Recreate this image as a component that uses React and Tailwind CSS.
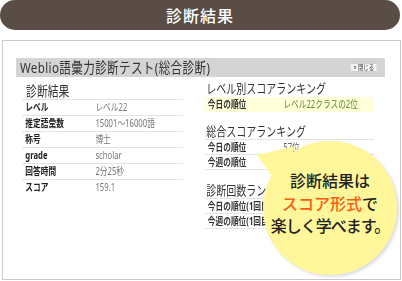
const resultRows = [
  ['レベル', 'レベル22'],
  ['推定語彙数', '15001〜16000語'],
  ['称号', '博士'],
  ['grade', 'scholar'],
  ['回答時間', '2分25秒'],
  ['スコア', '159.1'],
];

// values hidden behind the bubble are left empty
const totalRows = [
  ['今日の順位', '57位'],
  ['今週の順位', ''],
];

const countRows = [
  ['今日の順位(1回目)', ''],
  ['今週の順位(1回目)', ''],
];

function RankRow({ label, value }) {
  return (
    <div className="grid grid-cols-[102px_1fr] h-[15px] leading-[14px] border-b border-[#e4e4e4] text-[10px]">
      <span className="pl-[4px] font-bold text-[#333]">{label}</span>
      <span className="text-[#666]">{value}</span>
    </div>
  );
}

export default function App() {
  return (
    <div className="relative w-[402px] h-[281px] bg-white font-['Noto_Sans_CJK_JP',sans-serif] overflow-hidden">
      {/* top bar */}
      <div className="w-[400px] h-[30px] rounded-full bg-[#594d45] flex items-center justify-center">
        <span className="text-white text-[16px] font-medium tracking-[1px]">診断結果</span>
      </div>

      {/* screenshot frame */}
      <div className="ml-[2px] mt-[10px] w-[399px] h-[240px] border border-[#c9c9c9] overflow-hidden">
        <div className="w-[516px] pt-[17px] origin-top-left scale-x-[0.77] font-['Noto_Sans','Noto_Sans_CJK_JP',sans-serif]">
          <div className="ml-[17px] w-[479px] h-[19px] bg-[#d4d4d4] flex items-center justify-between pl-[5px] pr-[10px]">
            <span className="text-[15px] leading-[19px] tracking-[0.5px] text-[#333]">Weblio語彙力診断テスト(総合診断)</span>
            <span className="h-[9px] px-[3px] bg-[#f3f3f3] border border-[#d0d0d0] text-[7px] leading-[7px] text-[#444] flex items-center">× 閉じる</span>
          </div>

          <div className="flex">
            {/* left column */}
            <div className="ml-[25px] w-[209px]">
              <div className="pt-[6px] pl-[5px] text-[14px] leading-[16px] text-[#333] border-b border-[#e4e4e4]">診断結果</div>
              {resultRows.map(([label, value], i) => (
                <div
                  key={label}
                  className={`grid grid-cols-[95px_1fr] h-[16px] leading-[15px] text-[10px] ${i < resultRows.length - 1 ? 'border-b border-[#e4e4e4]' : ''}`}
                >
                  <span className="pl-[4px] font-bold text-[#222]">{label}</span>
                  <span className="text-[#777]">{value}</span>
                </div>
              ))}
            </div>

            {/* right column */}
            <div className="ml-[28px] w-[220px]">
              <div className="pt-[3px] pb-[1px] pl-[2px] text-[13px] leading-[16px] text-[#333]">レベル別スコアランキング</div>
              <div className="grid grid-cols-[102px_1fr] h-[15px] leading-[15px] bg-[#ffffd9] text-[10px]">
                <span className="pl-[4px] font-bold text-[#333]">今日の順位</span>
                <span className="text-[#5a8c2a]">レベル22クラスの2位</span>
              </div>

              <div className="mt-[11px] pl-[2px] text-[13px] leading-[16px] text-[#333] border-b border-[#e4e4e4]">総合スコアランキング</div>
              {totalRows.map(([label, value]) => (
                <RankRow key={label} label={label} value={value} />
              ))}

              <div className="mt-[12px] pl-[2px] text-[13px] leading-[16px] text-[#333] border-b border-[#e4e4e4]">診断回数ランキング</div>
              {countRows.map(([label, value]) => (
                <RankRow key={label} label={label} value={value} />
              ))}
            </div>
          </div>
        </div>
      </div>

      {/* speech bubble */}
      <svg className="absolute left-0 top-0 pointer-events-none" width="402" height="281" viewBox="0 0 402 281">
        <defs>
          <filter id="bubbleShadow" x="-20%" y="-20%" width="140%" height="140%">
            <feGaussianBlur stdDeviation="1.5" />
          </filter>
        </defs>
        <circle cx="332" cy="210" r="67" fill="#000" opacity="0.13" filter="url(#bubbleShadow)" />
        <path d="M257 155 L296 146 L275 181 Z" fill="#fff799" />
        <circle cx="330" cy="208" r="67" fill="#fff799" />
      </svg>
      <div className="absolute left-[263px] top-[169px] w-[134px] text-center text-[16px] leading-[22.5px] font-medium text-[#222]">
        <div>診断結果は</div>
        <div>
          <span className="text-[#ff5a14]">スコア形式</span>で
        </div>
        <div className="tracking-[-1px]">楽しく学べます。</div>
      </div>
    </div>
  );
}
